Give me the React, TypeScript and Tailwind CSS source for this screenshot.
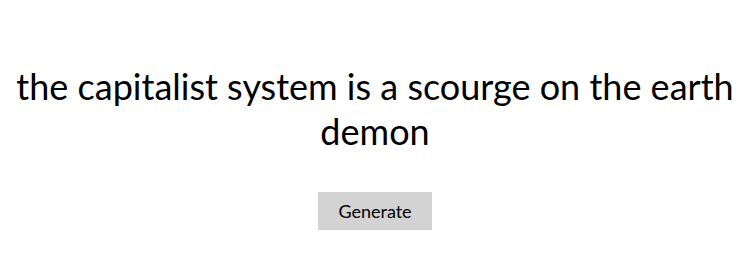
export default function App() {
  return (
    <div className="flex flex-col items-center bg-white pt-[64px] text-black">
      <h1 className="m-0 px-2 text-center font-['Lato',sans-serif] text-[36px] font-normal leading-[45px]">
        the capitalist system is a scourge on the earth demon
      </h1>
      <button className="mt-[38px] h-[38px] w-[114px] bg-[#d3d3d3] font-['Lato',sans-serif] text-[18px] text-black">
        Generate
      </button>
    </div>
  );
}
